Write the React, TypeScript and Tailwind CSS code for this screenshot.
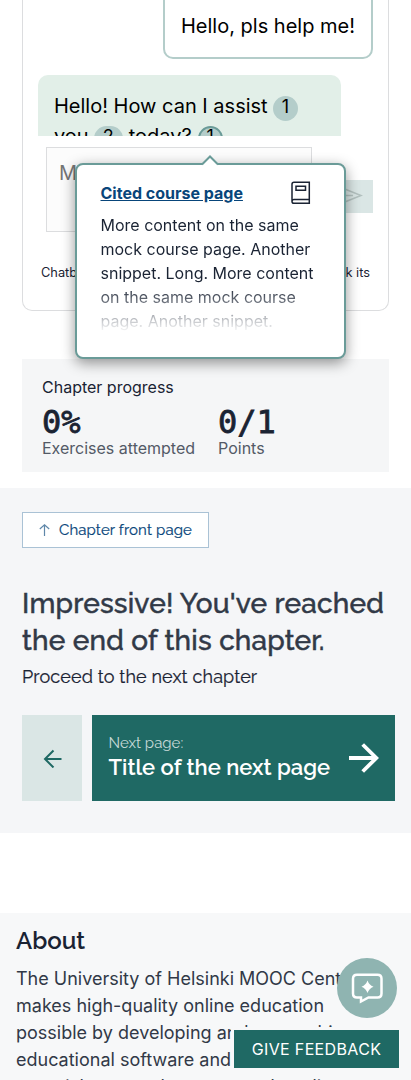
import type { ReactNode } from "react";

const inter = "font-['Inter','Liberation_Sans',sans-serif]";
const raleway = "font-['Raleway','Lato','Liberation_Sans',sans-serif]";

function Citation({ children, active = false }: { children: ReactNode; active?: boolean }) {
  return (
    <span
      className={
        active
          ? "inline-flex h-[25px] w-[25px] justify-center rounded-full border-2 border-[#6a9b98] bg-[#b4cdca] align-top text-[18px] leading-[17px]"
          : "inline-flex h-[25px] min-w-[25px] justify-center rounded-full bg-[#b4cdca] px-[9px] align-top text-[18px] leading-[22px]"
      }
    >
      {children}
    </span>
  );
}

function Chatbox() {
  return (
    <section className="mx-[22px] h-[311px] rounded-b-[10px] border border-t-0 border-[#dcdddf]">
      <div className="flex h-[136px] flex-col overflow-hidden px-[15px] text-[20px] leading-[30px] text-black">
        <div className="-mt-2.5 h-[69px] shrink-0 self-end rounded-[10px] border-2 border-[#b4cdca] px-4 pt-[19px] whitespace-nowrap">
          Hello, pls help me!
        </div>
        <div className="mt-4 w-[303px] shrink-0 rounded-[10px] bg-[#e2efe8] px-4 pt-4 pb-4 whitespace-nowrap">
          <div className="flex h-[30px]">
            <span className="mr-[5px]">Hello! How can I assist</span>
            <span className="mt-[5px] flex">
              <Citation>1</Citation>
            </span>
          </div>
          <div className="flex h-[30px]">
            <span className="mr-[5px]">you</span>
            <span className="mt-[5px] flex">
              <Citation>2</Citation>
            </span>
            <span className="mx-[6px]">today?</span>
            <span className="mt-[5px] flex">
              <Citation active>1</Citation>
            </span>
          </div>
        </div>
      </div>
      <div className="mt-[11px] flex items-center pr-[15px] pl-[23px]">
        <div className="h-[85px] w-[266px] border border-[#dcdddf] bg-[#fcfcfc] px-3 pt-[10px] text-[20px] leading-[30px] text-[#757575]">
          Message
        </div>
        <div className="mt-[13px] ml-auto flex h-[33px] w-[45px] items-center justify-center bg-[#dae6e5]">
          <svg width="24" height="22" viewBox="0 0 24 22" fill="none" stroke="#b3c1bf" strokeWidth="1.5">
            <path d="M2 2.5 22 10.5 2 18.5 5.5 10.5ZM5.5 10.5H14" />
          </svg>
        </div>
      </div>
      <p className="mt-[31px] flex justify-between px-[18px] text-[12.8px] leading-[20px] text-[#1a2333]">
        <span>Chatbots can</span>
        <span>Check its</span>
      </p>
    </section>
  );
}

function CitationPopover() {
  return (
    <aside className="absolute top-[163px] left-[75px] h-[196px] w-[271px] rounded-[8px] border-2 border-[#6a9b98] bg-white pr-6 pl-[23.5px] pt-[16px] shadow-[0_4px_14px_rgba(0,0,0,0.42)]">
      <svg className="absolute -top-[10px] left-[124px]" width="18" height="11" viewBox="0 0 18 11">
        <path d="M1 10 9 1.5 17 10V11H1Z" fill="white" />
        <path d="M1 9.5 9 1.5 17 9.5" fill="none" stroke="#6a9b98" strokeWidth="2" />
      </svg>
      <div className="flex h-6 items-center justify-between pr-[9px]">
        <a className="text-[16px] font-bold text-[#08457a] underline" href="#">
          Cited course page
        </a>
        <svg width="20" height="24" viewBox="0 0 20 24" fill="none" stroke="#1a2333" strokeWidth="1.5">
          <path d="M18.3 18.5V1.3H3Q1 1.3 1 3.3V20.5Q1 22.3 3 22.3H18.3V18.5H3Q1 18.5 1 20.5M5 5.3H14.5V9.3H5Z" />
        </svg>
      </div>
      <p className="mt-2 h-[120px] bg-linear-to-b from-[#1a2333] from-60% to-transparent to-100% bg-clip-text text-[16px] leading-6 whitespace-nowrap text-transparent">
        More content on the same
        <br />
        mock course page. Another
        <br />
        snippet. Long. More content
        <br />
        on the same mock course
        <br />
        page. Another snippet.
      </p>
    </aside>
  );
}

function ChapterProgress() {
  return (
    <section className="mx-[22px] mt-12 flex h-[113px] flex-col bg-[#f5f6f7] px-5 pt-4 text-[16px] leading-6">
      <h2 className="text-[#1a2333]">Chapter progress</h2>
      <div className="flex gap-[23px] whitespace-nowrap">
        {[
          ["0%", "Exercises attempted"],
          ["0/1", "Points"],
        ].map(([value, label]) => (
          <div key={label}>
            <div className="mt-1 h-[33px] font-['DejaVu_Sans_Mono',monospace] text-[32px] leading-[38px] font-normal text-[#1a2333] [-webkit-text-stroke:0.8px_#1a2333]">
              {value}
            </div>
            <div className="text-[#535a66]">{label}</div>
          </div>
        ))}
      </div>
    </section>
  );
}

function NextChapter() {
  return (
    <section className={`mt-4 h-[345px] bg-[#f5f6f8] px-[22px] pt-6 whitespace-nowrap ${raleway}`}>
      <a
        className="flex h-9 w-[187px] items-center border border-[#aac2d5] bg-white pl-[16px] text-[15px] tracking-[0.13px] text-[#08457a] [-webkit-text-stroke:0.2px_#08457a]"
        href="#"
      >
        <svg className="mr-[9px]" width="11" height="13" viewBox="0 0 11 13" fill="none" stroke="#5f87a9" strokeWidth="1.2">
          <path d="M5.5 12V.8M.8 5 5.5.8 10.2 5" />
        </svg>
        <span>Chapter front page</span>
      </a>
      <h2 className="mt-[37px] text-[28px] leading-[37px] font-medium tracking-[0.2px] text-[#313947] [-webkit-text-stroke:0.5px_#313947]">
        <span>Impressive! You've reached</span>
        <br />
        <span>the end of this chapter.</span>
      </h2>
      <p className="mt-1 text-[18px] leading-[28px] tracking-[0.13px] text-[#1a2333] [-webkit-text-stroke:0.2px_#1a2333]">
        <span>Proceed to the next chapter</span>
      </p>
      <div className="mt-6 flex h-[86px] w-[373px] gap-[10px]">
        <a className="flex w-[60px] items-center justify-center bg-[#dae6e5]" href="#" aria-label="Previous page">
          <svg width="19" height="19" viewBox="0 0 19 19" fill="none" stroke="#1f6964" strokeWidth="2">
            <path d="M18.5 10H2M10.5 1.5 2 10 10.5 18.5" />
          </svg>
        </a>
        <a className="flex flex-1 items-center bg-[#1f6964] pr-4 pl-[16.5px] text-white" href="#">
          <span className="flex flex-col">
            <span className="text-[15px] leading-[18px] text-[#c7dad8]">Next page:</span>
            <span className="mt-0.5 mb-0.5 text-[22px] leading-[26px] font-semibold">Title of the next page</span>
          </span>
          <svg className="ml-auto" width="30" height="30" viewBox="0 0 30 30" fill="none" stroke="white" strokeWidth="3.8">
            <path d="M0 15H27.5M13.7 1.5 27.3 15 13.7 28.5" />
          </svg>
        </a>
      </div>
    </section>
  );
}

function Footer() {
  return (
    <footer className="mt-20 h-[167px] overflow-hidden bg-[#f7f8f9] px-4 pt-3 whitespace-nowrap">
      <h2 className={`text-[24px] leading-[32px] font-semibold text-[#1a2333] ${raleway}`}>
        <span>About</span>
      </h2>
      <p className="mt-2 text-[18px] leading-[27px] text-[#313947]">
        The University of Helsinki MOOC Center
        <br />
        makes high-quality online education
        <br />
        possible by developing and researching
        <br />
        educational software and online
        <br />
        materials. several courses and studies
      </p>
    </footer>
  );
}

export default function App() {
  return (
    <main className={`relative h-[1080px] w-[411px] overflow-hidden bg-white ${inter}`}>
      <Chatbox />
      <ChapterProgress />
      <NextChapter />
      <Footer />
      <CitationPopover />
      <button
        className="absolute top-[958px] left-[337px] flex h-[60px] w-[60px] items-center justify-center rounded-full bg-[#8fb4b1]"
        aria-label="Open chatbot"
      >
        <svg width="32" height="32" viewBox="0 0 32 32" fill="none">
          <path
            d="M6 2.8H26.5Q30.5 2.8 30.5 6.8V21.5Q30.5 25.5 26.5 25.5H17.5L10 29.5V25.5H6Q2 25.5 2 21.5V6.8Q2 2.8 6 2.8Z"
            stroke="white"
            strokeWidth="2.5"
          />
          <path d="M16.5 8.5Q18 13 22.5 14.8Q18 16.6 16.5 21.1Q15 16.6 10.5 14.8Q15 13 16.5 8.5Z" fill="white" />
        </svg>
      </button>
      <button className="absolute top-[1030px] left-[234px] flex h-[38px] w-[165px] items-center justify-center bg-[#1f6964] text-[16px] tracking-[0.35px] whitespace-nowrap text-white ring-3 ring-[#f7f8f9]">
        GIVE FEEDBACK
      </button>
    </main>
  );
}
